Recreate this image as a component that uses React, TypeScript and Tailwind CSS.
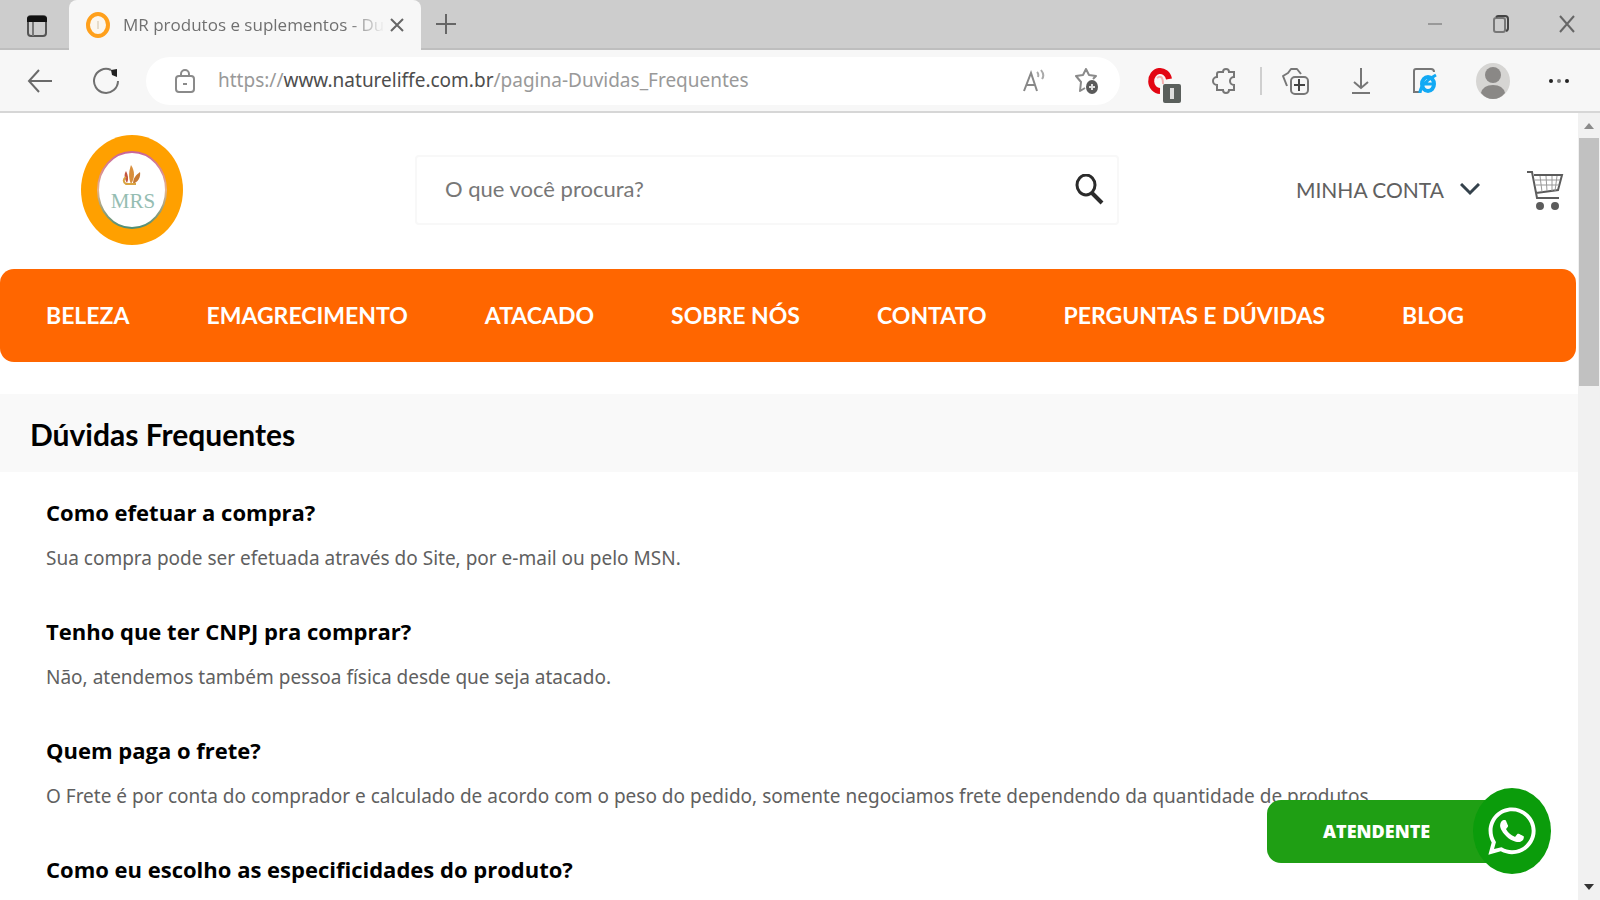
import React, { useState } from 'react';
import { FaWhatsapp } from 'react-icons/fa';

type Faq = {
  id: number;
  question: string;
  answer: string;
};

const menuItems = [
  'BELEZA',
  'EMAGRECIMENTO',
  'ATACADO',
  'SOBRE NÓS',
  'CONTATO',
  'PERGUNTAS E DÚVIDAS',
  'BLOG',
];

const faqs: Faq[] = [
  {
    id: 1,
    question: 'Como efetuar a compra?',
    answer: 'Sua compra pode ser efetuada através do Site, por e-mail ou pelo MSN.',
  },
  {
    id: 2,
    question: 'Tenho que ter CNPJ pra comprar?',
    answer: 'Não, atendemos também pessoa física desde que seja atacado.',
  },
  {
    id: 3,
    question: 'Quem paga o frete?',
    answer:
      'O Frete é por conta do comprador e calculado de acordo com o peso do pedido, somente negociamos frete dependendo da quantidade de produtos.',
  },
  {
    id: 4,
    question: 'Como eu escolho as especificidades do produto?',
    answer: '',
  },
];

function TabStrip() {
  return (
    <div className="flex h-[50px] shrink-0 border-b-2 border-[#bebebe] bg-[#cdcdcd]">
      <button aria-label="Menu de guias" className="flex w-[69px] items-center justify-center pl-1 pt-1">
        <svg width="22" height="24" viewBox="0 0 22 24" fill="none">
          <rect x="2" y="2" width="18" height="20" rx="3" stroke="#555" strokeWidth="2" />
          <path d="M1 5a3 3 0 0 1 3-3h14a3 3 0 0 1 3 3v3H1z" fill="#111" />
          <path d="M7 8v14" stroke="#777" strokeWidth="2" />
        </svg>
      </button>
      <div className="-mb-0.5 flex w-[352px] items-center rounded-t-lg bg-[#f7f7f7] pl-4 pr-3">
        <svg width="26" height="28" viewBox="0 0 26 28" className="shrink-0">
          <ellipse cx="13" cy="14" rx="10" ry="11" fill="#fbf6ee" stroke="#ffa01c" strokeWidth="4" />
          <path d="M13 10v8" stroke="#e6dccb" strokeWidth="2" />
        </svg>
        <span className="ml-3 min-w-0 flex-1 whitespace-nowrap text-[17px] text-[#707070] [mask-image:linear-gradient(to_right,black_86%,transparent)]">
          MR produtos e suplementos - Du
        </span>
        <button aria-label="Fechar guia" className="flex w-6 justify-center">
          <svg width="16" height="16" viewBox="0 0 16 16" fill="none" stroke="#666" strokeWidth="2">
            <path d="M2 2l12 12M14 2L2 14" />
          </svg>
        </button>
      </div>
      <button aria-label="Nova guia" className="flex w-[50px] items-center justify-center">
        <svg width="22" height="22" viewBox="0 0 22 22" fill="none" stroke="#666" strokeWidth="2">
          <path d="M11 1v20M1 11h20" />
        </svg>
      </button>
      <div className="ml-auto flex">
        <button aria-label="Minimizar" className="flex w-[66px] items-center justify-center">
          <svg width="16" height="16" viewBox="0 0 16 16" stroke="#999" strokeWidth="2">
            <path d="M1 8h14" />
          </svg>
        </button>
        <button aria-label="Restaurar" className="flex w-[66px] items-center justify-center">
          <svg width="18" height="20" viewBox="0 0 18 20" fill="none" stroke="#777" strokeWidth="2">
            <rect x="2" y="4" width="11" height="14" rx="2" />
            <path d="M4 3a3 3 0 0 1 2-1h7a3 3 0 0 1 3 3v9a3 3 0 0 1-2 3" stroke="#444" />
          </svg>
        </button>
        <button aria-label="Fechar" className="flex w-[66px] items-center justify-center">
          <svg width="18" height="20" viewBox="0 0 18 20" fill="none" stroke="#666" strokeWidth="2">
            <path d="M2 2l14 16M16 2L2 18" />
          </svg>
        </button>
      </div>
    </div>
  );
}

function AddressBar() {
  return (
    <div className="flex h-[63px] shrink-0 items-center border-b-2 border-[#d6d6d6] bg-[#f7f7f7] pr-2">
      <button aria-label="Voltar" className="ml-2 flex w-16 justify-center">
        <svg width="26" height="24" viewBox="0 0 26 24" fill="none" stroke="#6a6a6a" strokeWidth="2">
          <path d="M12 1L2 12l10 11M2 12h23" />
        </svg>
      </button>
      <button aria-label="Atualizar" className="mr-1.5 flex w-[68px] justify-center">
        <svg width="28" height="28" viewBox="0 0 28 28" fill="none">
          <path d="M19 3A12 12 0 1 0 26 14" stroke="#707070" strokeWidth="2" />
          <path d="M19 3l6-1v8l-5-2z" fill="#222" />
        </svg>
      </button>
      <div className="flex h-12 flex-1 items-center rounded-full bg-white pl-7 pr-5">
        <svg width="22" height="26" viewBox="0 0 22 26" fill="none" stroke="#8a8a8a" strokeWidth="2">
          <rect x="2" y="8" width="18" height="16" rx="3" />
          <path d="M7 8V6a4 4 0 0 1 8 0v2" />
          <path d="M9 16h4" />
        </svg>
        <div className="ml-[22px] flex-1 font-['Noto_Sans',sans-serif] text-[19px] text-[#999]">
          https://<span className="text-[#4d4d4d]">www.natureliffe.com.br</span>/pagina-Duvidas_Frequentes
        </div>
        <button aria-label="Ler em voz alta" className="mr-7">
          <svg width="24" height="26" viewBox="0 0 24 26" fill="none" stroke="#888" strokeWidth="2">
            <path d="M2 23L9 5l6 18M5 17h8" />
            <path d="M15 4q2 2 1 5M19 2q4 5 1 9" stroke="#aaa" />
          </svg>
        </button>
        <button aria-label="Adicionar aos favoritos">
          <svg width="26" height="28" viewBox="0 0 26 28" fill="none">
            <path
              d="M19 12l3-3-7-1-3-6-3 6-7 1 5 6-1 9 5-3"
              stroke="#8a8a8a"
              strokeWidth="2"
              strokeLinejoin="round"
            />
            <ellipse cx="18" cy="20" rx="6" ry="7" fill="#5a5a5a" />
            <path d="M18 17v6M15 20h6" stroke="#ddd" strokeWidth="2" />
          </svg>
        </button>
      </div>
      <button aria-label="Bloqueador de anúncios" className="ml-3 flex w-16 justify-center">
        <svg width="34" height="38" viewBox="0 0 34 38" fill="none" className="mt-2">
          <path d="M13 25A9 10 0 1 1 22 13" stroke="#e30613" strokeWidth="6" />
          <path d="M10 12q6-4 6 6" stroke="#f6b1b1" strokeWidth="2" />
          <rect x="16" y="18" width="18" height="19" rx="2" fill="#5a5f5c" />
          <path d="M25 22v11" stroke="#ddd" strokeWidth="4" />
        </svg>
      </button>
      <button aria-label="Extensões" className="mr-2 flex w-14 justify-center">
        <svg width="24" height="28" viewBox="0 0 24 28" fill="none" stroke="#777" strokeWidth="2">
          <path d="M7 5h4a3 3 0 0 1 6 0h5v5a4 4 0 0 0 0 8v5h-5a3 3 0 0 1-6 0H5v-5a4 4 0 0 1 0-8V7a2 2 0 0 1 2-2z" />
        </svg>
      </button>
      <div className="h-7 w-0.5 bg-[#cfcfcf]" />
      <button aria-label="Coleções" className="flex w-[66px] justify-center">
        <svg width="28" height="28" viewBox="0 0 28 28" fill="none" stroke="#777" strokeWidth="2">
          <path d="M6 19l-2-5-2-5 5-3 3-4h6l4 5" strokeLinejoin="round" />
          <rect x="10" y="10" width="17" height="17" rx="4" />
          <path d="M18 12v12M13 18h11" stroke="#444" />
        </svg>
      </button>
      <button aria-label="Downloads" className="flex w-[66px] justify-center">
        <svg width="20" height="28" viewBox="0 0 20 28" fill="none" stroke="#777" strokeWidth="2">
          <path d="M10 1v20M3 15l7 6 7-6M1 26h18" />
        </svg>
      </button>
      <button aria-label="Modo Internet Explorer" className="flex w-[62px] justify-center">
        <svg width="26" height="28" viewBox="0 0 26 28" fill="none">
          <path d="M7 25H2V4a2 2 0 0 1 2-2h15a3 3 0 0 1 3 3" stroke="#777" strokeWidth="2" />
          <ellipse cx="16" cy="17" rx="6" ry="7" stroke="#12a9f4" strokeWidth="4" />
          <path d="M11 17h12M8 26q0-9 16-18" stroke="#12a9f4" strokeWidth="3" />
        </svg>
      </button>
      <button aria-label="Perfil" className="ml-1 flex w-[66px] justify-center">
        <svg width="34" height="36" viewBox="0 0 34 36">
          <ellipse cx="17" cy="18" rx="17" ry="18" fill="#d6d5d3" />
          <ellipse cx="17" cy="12" rx="8" ry="8" fill="#8a8886" />
          <path d="M5 30q2-8 12-8t12 8q-5 6-12 6T5 30z" fill="#8a8886" />
        </svg>
      </button>
      <button aria-label="Configurações e mais" className="flex w-[66px] justify-center">
        <svg width="22" height="6" viewBox="0 0 22 6">
          <circle cx="3" cy="3" r="2" fill="#222" />
          <circle cx="11" cy="3" r="2" fill="#777" />
          <circle cx="19" cy="3" r="2" fill="#222" />
        </svg>
      </button>
    </div>
  );
}

function Logo() {
  return (
    <svg width="102" height="110" viewBox="0 0 102 110">
      <defs>
        <linearGradient id="ring" x1="0" y1="0" x2="0" y2="1">
          <stop offset="0" stopColor="#c9649a" />
          <stop offset="0.5" stopColor="#e6b48c" />
          <stop offset="1" stopColor="#4f8f76" />
        </linearGradient>
      </defs>
      <ellipse cx="51" cy="55" rx="51" ry="55" fill="#ffa000" />
      <ellipse cx="51" cy="55" rx="34" ry="38" fill="#fff" stroke="url(#ring)" strokeWidth="2" />
      <path d="M46 48c-3-5-3-9-1-12 2 4 3 8 1 12z" fill="#c4563f" />
      <path d="M50 49c-3-7-2-13 0-19 4 6 4 13 0 19z" fill="#d98f3c" />
      <path d="M52 49c0-6 3-9 7-12 1 5-2 10-7 12z" fill="#c77a35" />
      <path d="M45 42c-3 2-3 5 0 7h10" stroke="#d9a441" strokeWidth="2" fill="none" />
      <text
        x="52"
        y="73"
        textAnchor="middle"
        fontFamily="Liberation Serif, serif"
        fontSize="21"
        fill="#95bdb2"
      >
        MRS
      </text>
    </svg>
  );
}

function StoreHeader() {
  const [search, setSearch] = useState('');

  return (
    <header className="flex h-[156px] shrink-0 items-center pb-0.5 pl-[81px] pr-3.5">
      <a href="#" aria-label="MRS">
        <Logo />
      </a>
      <form
        onSubmit={(e) => e.preventDefault()}
        className="ml-[232px] flex h-[70px] max-w-[704px] flex-1 items-center rounded border-2 border-[#f8f8f8]"
      >
        <input
          type="text"
          aria-label="Buscar"
          placeholder="O que você procura?"
          value={search}
          onChange={(e) => setSearch(e.target.value)}
          className="h-full min-w-0 flex-1 px-7 pb-1 font-[Lato,sans-serif] text-[22px] text-[#555] placeholder-[#777] focus:outline-none"
        />
        <button aria-label="Pesquisar" className="mr-3">
          <svg width="30" height="32" viewBox="0 0 30 32" fill="none" stroke="#2b2b2b">
            <ellipse cx="11" cy="11" rx="9" ry="10" strokeWidth="3" />
            <path d="M17 19l10 10" strokeWidth="4" />
          </svg>
        </button>
      </form>
      <button className="ml-auto flex items-center gap-4 font-[Lato,sans-serif] text-[21px] text-[#606060]">
        MINHA CONTA
        <svg width="20" height="14" viewBox="0 0 20 14" fill="none" stroke="#34424c" strokeWidth="3">
          <path d="M1 1l9 9 9-9" />
        </svg>
      </button>
      <a href="#" aria-label="Carrinho" className="ml-[46px]">
        <svg width="38" height="40" viewBox="0 0 38 40" fill="none" stroke="#5c5c5c" strokeWidth="2">
          <path d="M1 2h5l5 26h22M8 5h28l-4 15-22 3" />
          <path d="M14 6l2 16M20 6l1 15M26 6v15M31 6l-2 15M9 10h25M10 15h23" stroke="#999" strokeWidth="1" />
          <circle cx="14" cy="36" r="3" fill="#5c5c5c" />
          <circle cx="29" cy="36" r="3" fill="#5c5c5c" />
        </svg>
      </a>
    </header>
  );
}

function ScrollBar() {
  return (
    <div className="flex w-[22px] shrink-0 flex-col items-center bg-[#f1f1f1]">
      <svg width="22" height="25" viewBox="0 0 22 25">
        <path d="M6 16l5-6 5 6z" fill="#8a8a8a" />
      </svg>
      <div className="h-[248px] w-5 bg-[#c1c1c1]" />
      <svg width="22" height="25" viewBox="0 0 22 25" className="mt-auto">
        <path d="M6 9l5 6 5-6z" fill="#333" />
      </svg>
    </div>
  );
}

export default function App() {
  return (
    <div className="flex h-screen flex-col overflow-hidden bg-white font-['Open_Sans',sans-serif]">
      <TabStrip />
      <AddressBar />

      <div className="relative flex min-h-0 flex-1">
        <main className="flex min-w-0 flex-1 flex-col overflow-hidden">
          <StoreHeader />

          {/* Category menu */}
          <nav className="mr-0.5 flex h-[93px] shrink-0 items-center gap-[77px] rounded-[14px] bg-[#ff6600] px-[46px] font-[Lato,sans-serif] text-[23px] font-bold whitespace-nowrap text-white">
            {menuItems.map((item) => (
              <a key={item} href="#">
                {item}
              </a>
            ))}
          </nav>

          <h1 className="mt-8 flex h-[78px] shrink-0 items-center bg-[#f9f9f9] px-[30px] pt-0.5 font-[Lato,sans-serif] text-3xl font-bold text-black">
            Dúvidas Frequentes
          </h1>

          {/* Questions */}
          <div className="px-[46px] pt-6">
            {faqs.map((faq) => (
              <section key={faq.id} className="h-[119px] whitespace-nowrap">
                <h2 className="text-[22px] leading-8 font-bold text-black">{faq.question}</h2>
                <p className="mt-3 font-['Noto_Sans',sans-serif] text-[19px] leading-9 text-[#606060]">
                  {faq.answer}
                </p>
              </section>
            ))}
          </div>
        </main>

        <ScrollBar />

        {/* Chat button */}
        <button className="absolute right-[49px] bottom-[26px] flex h-[86px] items-center text-white">
          <span className="flex h-[63px] w-[234px] items-center rounded-l-[14px] bg-[#1f9f14] pl-14 text-lg font-extrabold">
            ATENDENTE
          </span>
          <span className="-ml-7 flex h-[86px] w-[78px] items-center justify-center rounded-[50%] bg-[#0b9c0b]">
            <FaWhatsapp className="text-[54px]" />
          </span>
        </button>
      </div>
    </div>
  );
}
